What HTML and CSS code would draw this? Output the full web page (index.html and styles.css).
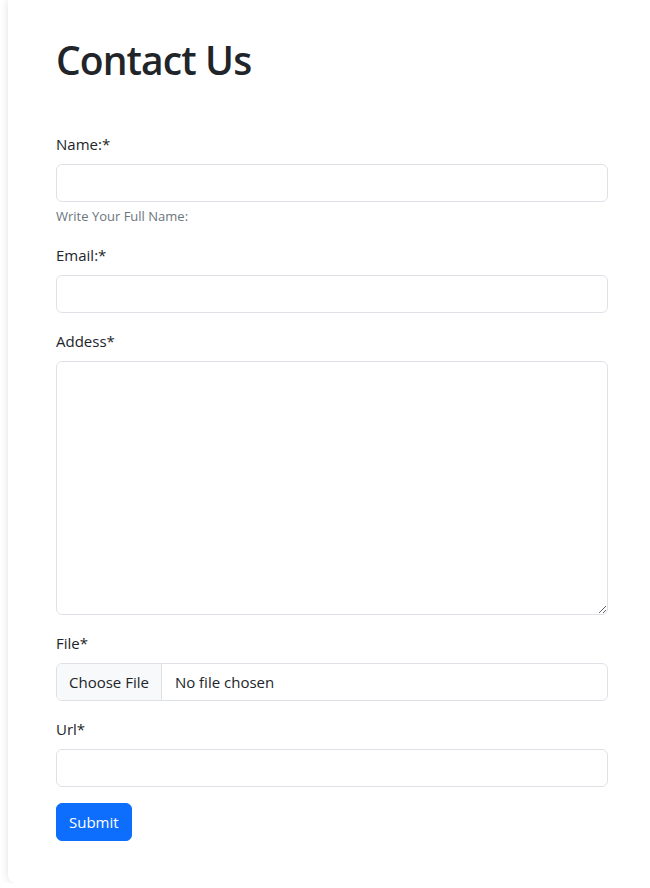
FILE: index.html
```html
<!DOCTYPE html>
<html lang="en">
<head>
<meta charset="utf-8">
<title>Contact Us</title>
<link rel="stylesheet" href="styles.css">
</head>
<body>
<div class="card">
  <h1 class="title">Contact Us</h1>
  <form class="form">
    <div class="field">
      <label class="label" for="name">Name:*</label>
      <input class="control" type="text" id="name">
      <div class="help">Write Your Full Name:</div>
    </div>
    <div class="field">
      <label class="label" for="email">Email:*</label>
      <input class="control" type="email" id="email">
    </div>
    <div class="field">
      <label class="label" for="addr">Addess*</label>
      <textarea class="control area" id="addr"></textarea>
    </div>
    <div class="field">
      <label class="label">File*</label>
      <div class="control file">
        <span class="file-btn">Choose File</span>
        <span class="file-name">No file chosen</span>
      </div>
    </div>
    <div class="field">
      <label class="label" for="url">Url*</label>
      <input class="control" type="url" id="url">
    </div>
    <button class="btn" type="button">Submit</button>
  </form>
</div>
</body>
</html>
```
FILE: styles.css
```css
html, body {
  margin: 0;
  padding: 0;
  background: #fff;
  overflow: hidden;
}
body {
  font-family: "Open Sans", "Noto Sans", sans-serif;
  font-size: 16px;
  line-height: 1.5;
  color: #212529;
  padding-left: 8px;
}
.card {
  width: 552px;
  padding: 36px 48px 42px 48px;
  background: #fff;
  border-radius: 0 0 8px 8px;
  box-shadow: 0 0 8px rgba(0, 0, 0, 0.12);
}
.title {
  margin: 0 0 48px 0;
  font-size: 39px;
  line-height: 48px;
  font-weight: 600;
  letter-spacing: -0.9px;
}
.form { display: flex; flex-direction: column; }
.field { display: flex; flex-direction: column; margin-bottom: 16px; }
.label { margin-bottom: 8px; line-height: 24px; font-size: 15px; }
.control {
  box-sizing: border-box;
  height: 38px;
  width: 100%;
  border: 1px solid #dee2e6;
  border-radius: 6px;
  background: #fff;
  font: inherit;
  margin: 0;
  padding: 6px 12px;
}
.area { height: 254px; resize: vertical; }
.help { margin-top: 4px; font-size: 13px; line-height: 21px; color: #6c757d; }
.file { display: flex; padding: 0; overflow: hidden; align-items: stretch; font-size: 15px; }
.file-btn {
  background: #f8f9fa;
  border-right: 1px solid #dee2e6;
  padding: 0 12px;
  display: flex;
  align-items: center;
}
.file-name { padding: 0 13px; display: flex; align-items: center; }
.btn {
  align-self: flex-start;
  height: 38px;
  padding: 0 12px;
  background: #0d6efd;
  color: #fff;
  border: 1px solid #0d6efd;
  border-radius: 6px;
  font: inherit;
  font-size: 15px;
}
```
